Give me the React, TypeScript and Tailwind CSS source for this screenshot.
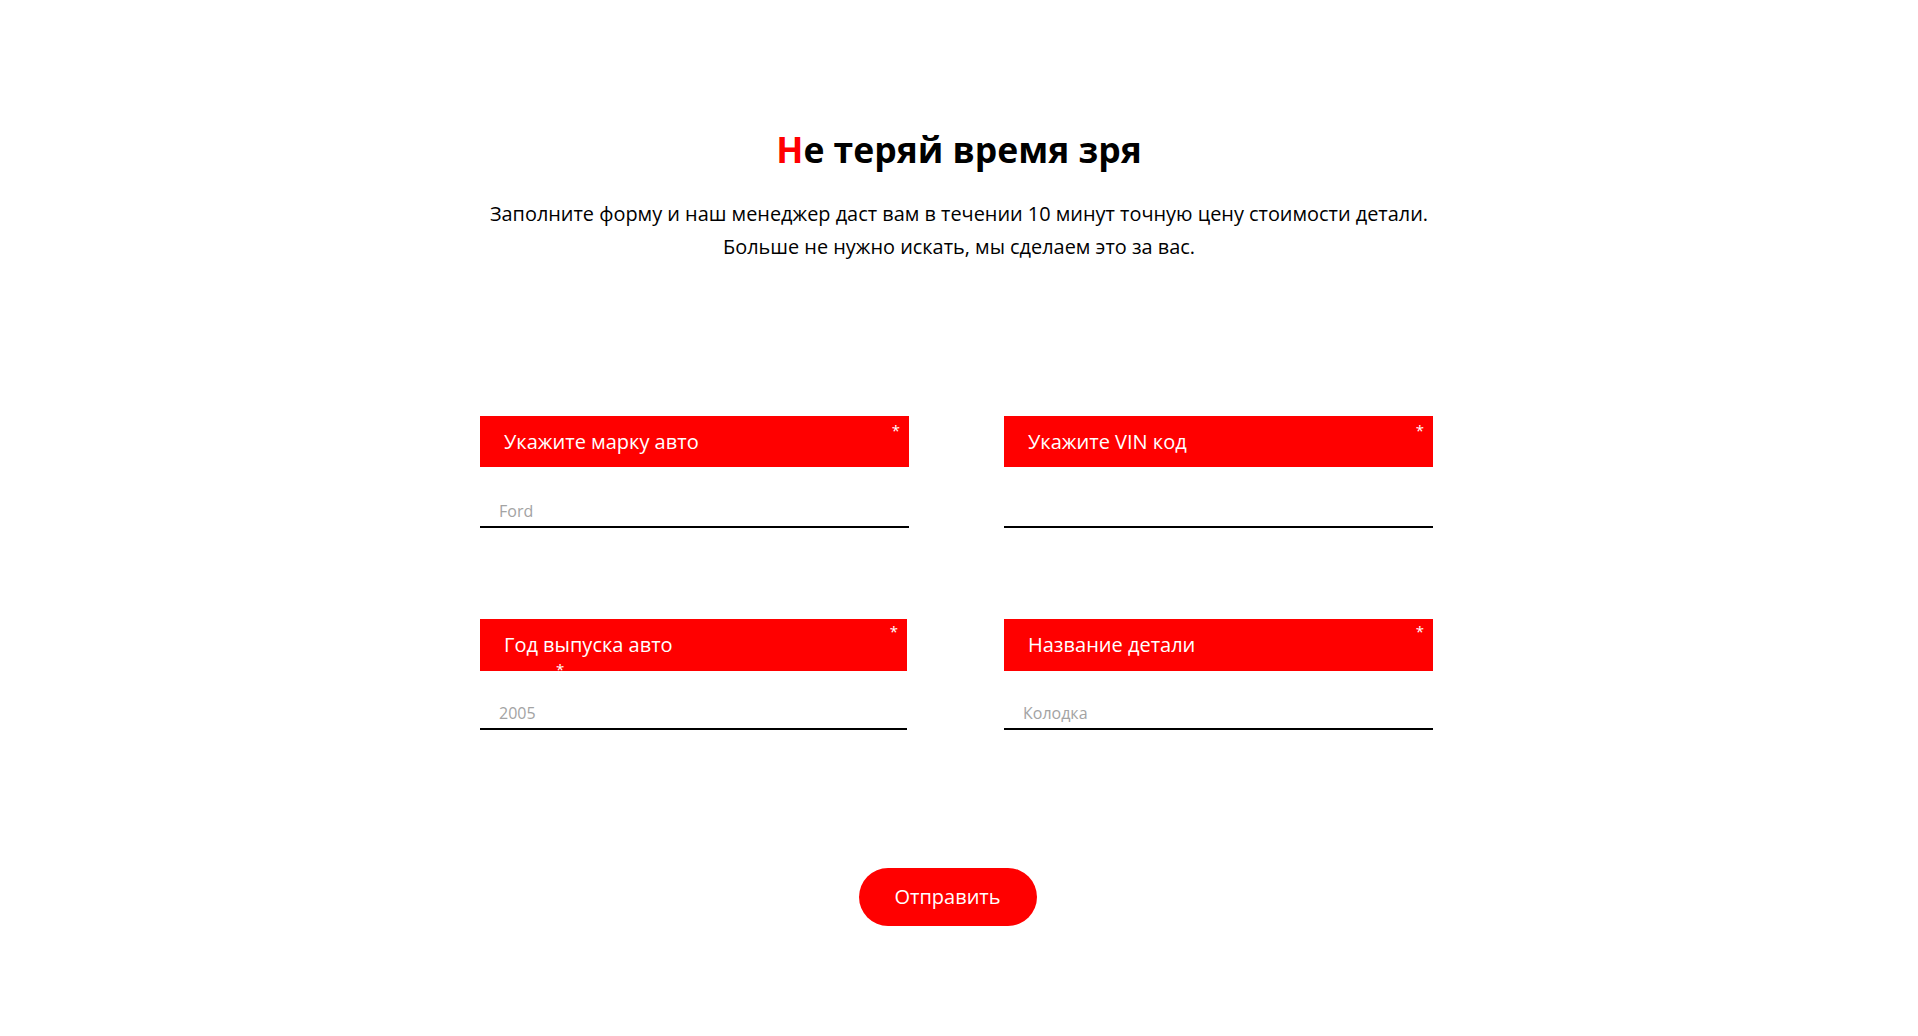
import React from "react";

interface Field {
  label: string;
  placeholder: string;
  boxH: string;
  inputH: string;
  starTop: string;
  width?: string;
  stray?: boolean;
}

const rows: Field[][] = [
  [
    { label: "Укажите марку авто", placeholder: "Ford", boxH: "h-[51px]", inputH: "h-[61px]", starTop: "top-[7px]" },
    { label: "Укажите VIN код", placeholder: "", boxH: "h-[51px]", inputH: "h-[61px]", starTop: "top-[7px]" },
  ],
  [
    {
      label: "Год выпуска авто",
      placeholder: "2005",
      boxH: "h-[52px]",
      inputH: "h-[59px]",
      starTop: "top-[5px]",
      width: "w-[427px]",
      stray: true,
    },
    { label: "Название детали", placeholder: "Колодка", boxH: "h-[52px]", inputH: "h-[59px]", starTop: "top-[5px]" },
  ],
];

function FormField({ f }: { f: Field }) {
  return (
    <div className={`flex flex-col ${f.width ?? ""}`}>
      <div className={`relative flex items-center bg-[#ff0000] pl-[24px] text-[20px] text-white ${f.boxH}`}>
        {f.label}
        <span className={`absolute right-[9px] text-[15px] leading-none ${f.starTop}`}>*</span>
        {f.stray && (
          <span className="absolute bottom-[-6px] left-[76px] text-[15px] leading-none text-white">*</span>
        )}
      </div>
      <div className={`flex items-end border-b-2 border-black ${f.inputH}`}>
        <input
          className="w-full bg-transparent pb-[3px] pl-[19px] text-[16px] text-black outline-none placeholder:text-[#a3a3a3]"
          placeholder={f.placeholder}
        />
      </div>
    </div>
  );
}

export default function App() {
  return (
    <div className="min-h-screen bg-white font-['Open_Sans',sans-serif] text-black">
      <div className="pt-[124px] text-center">
        <h1 className="text-[35.5px] font-bold leading-[50px]">
          <span className="text-[#ff0000]">Н</span>е теряй время зря
        </h1>
        <p className="mt-[23px] text-[19.9px] leading-[33px]">
          Заполните форму и наш менеджер даст вам в течении 10 минут точную цену стоимости детали.
          <br />
          Больше не нужно искать, мы сделаем это за вас.
        </p>
      </div>

      <form className="ml-[480px] mt-[153px] w-[953px]" onSubmit={(e) => e.preventDefault()}>
        <div className="flex flex-col gap-y-[91px]">
          {rows.map((row, i) => (
            <div key={i} className="grid grid-cols-2 gap-x-[95px]">
              {row.map((f) => (
                <FormField key={f.label} f={f} />
              ))}
            </div>
          ))}
        </div>
        <div className="mt-[138px] flex justify-center pr-[18px] pb-[100px]">
          <button
            type="submit"
            className="h-[58px] w-[178px] rounded-full bg-[#ff0000] text-[20px] text-white"
          >
            Отправить
          </button>
        </div>
      </form>
    </div>
  );
}
